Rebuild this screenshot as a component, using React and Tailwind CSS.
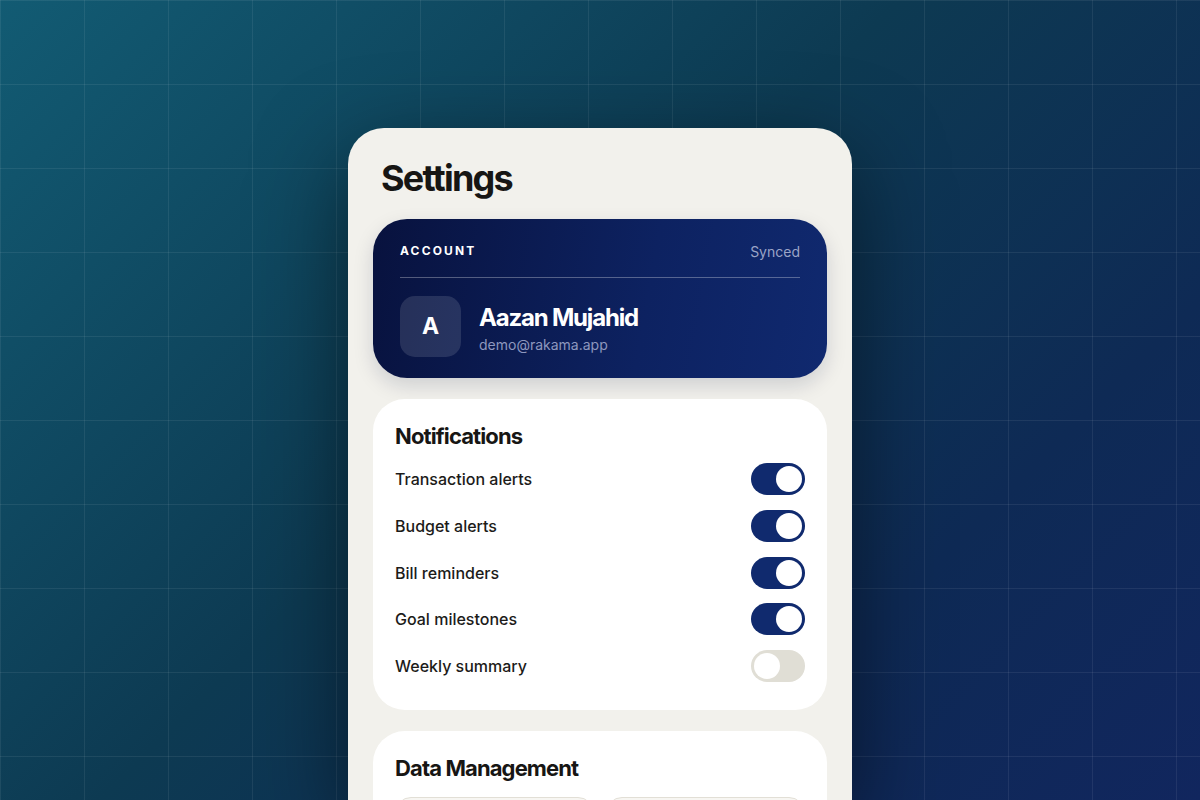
const rows = [
  { label: 'Transaction alerts', on: true },
  { label: 'Budget alerts', on: true },
  { label: 'Bill reminders', on: true },
  { label: 'Goal milestones', on: true },
  { label: 'Weekly summary', on: false },
]

function Toggle({ on }) {
  return (
    <div
      className={
        on
          ? 'relative w-[54px] h-[32px] rounded-full bg-[#102a6e] shrink-0'
          : 'relative w-[54px] h-[32px] rounded-full bg-[#e0ded5] shrink-0'
      }
    >
      <div
        className={
          on
            ? 'absolute top-[3px] right-[3px] w-[26px] h-[26px] rounded-full bg-white'
            : 'absolute top-[3px] left-[3px] w-[26px] h-[26px] rounded-full bg-white'
        }
      />
    </div>
  )
}

export default function App() {
  return (
    <div
      className="relative w-full h-[800px] overflow-hidden bg-[linear-gradient(135deg,#125b73_0%,#0d3a52_45%,#0e2a55_75%,#11265e_100%)]"
      style={{ fontFamily: 'Inter, "Noto Sans", sans-serif' }}
    >
      {/* grid overlay */}
      <div className="absolute inset-0 bg-[linear-gradient(to_right,rgba(255,255,255,0.07)_1px,transparent_1px),linear-gradient(to_bottom,rgba(255,255,255,0.07)_1px,transparent_1px)] bg-[size:84px_84px]" />

      {/* phone */}
      <div className="relative mx-auto mt-[128px] w-[504px] h-[672px] rounded-t-[36px] bg-[#f2f1ec] shadow-[0_30px_90px_rgba(0,0,0,0.5)] overflow-hidden px-[25px] pt-[30px]">
        <h1 className="pl-[8px] text-[36px] leading-[40px] font-bold tracking-[-0.05em] text-[#171614]">Settings</h1>

        {/* account */}
        <div className="mt-[21px] rounded-[34px] bg-[linear-gradient(100deg,#08123e_0%,#0d2261_60%,#10296f_100%)] px-[27px] pt-[24px] pb-[21px] shadow-[0_8px_20px_rgba(10,20,60,0.15)]">
          <div className="flex items-center justify-between h-[16px]">
            <span className="text-[12px] font-bold tracking-[0.18em] text-white">ACCOUNT</span>
            <span className="text-[14px] text-[#9ba4c6]">Synced</span>
          </div>
          <div className="mt-[18px] h-px bg-white/30" />
          <div className="mt-[18px] flex items-center gap-[18px]">
            <div className="w-[61px] h-[61px] rounded-[15px] bg-white/[0.12] flex items-center justify-center text-white text-[23px] font-bold">A</div>
            <div className="flex flex-col pt-[4px]">
              <span className="text-[24px] leading-[30px] font-bold tracking-[-0.05em] text-white">Aazan Mujahid</span>
              <span className="text-[14px] leading-[20px] text-[#8e97be] mt-[2px]">demo@rakama.app</span>
            </div>
          </div>
        </div>

        {/* notifications */}
        <div className="mt-[21px] rounded-[32px] bg-white px-[22px] pt-[23px] pb-[28px]">
          <h2 className="text-[22px] leading-[28px] font-bold tracking-[-0.04em] text-[#171614]">Notifications</h2>
          <div className="mt-[13px] flex flex-col gap-[14.75px]">
            {rows.map((r) => (
              <div key={r.label} className="flex items-center justify-between h-[32px]">
                <span className="text-[16px] font-medium text-[#1c1b19]">{r.label}</span>
                <Toggle on={r.on} />
              </div>
            ))}
          </div>
        </div>

        {/* data management */}
        <div className="mt-[21px] rounded-[32px] bg-white px-[22px] pt-[23px] pb-[28px]">
          <h2 className="text-[22px] leading-[28px] font-bold tracking-[-0.04em] text-[#171614]">Data Management</h2>
          <div className="mt-[15px] grid grid-cols-2 gap-[12px]">
            <div className="h-[48px] rounded-[16px] border border-[#e2dfd6] bg-[#f7f6f2]" />
            <div className="h-[48px] rounded-[16px] border border-[#e2dfd6] bg-[#f7f6f2]" />
          </div>
        </div>
      </div>
    </div>
  )
}
